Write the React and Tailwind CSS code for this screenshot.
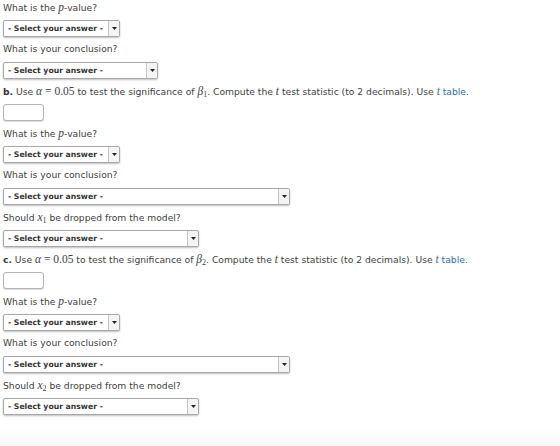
import React from 'react'

const sans = "font-['DejaVu_Sans',Verdana,sans-serif]"
const serif = "font-['Liberation_Serif',serif]"

function M({ children, italic }) {
  return <span className={`${serif} text-[11.5px] ${italic ? 'italic' : ''}`}>{children}</span>
}

function Label({ children }) {
  return <div className={`h-[14px] leading-[14px] text-[9.2px] text-[#404040] whitespace-nowrap ${sans}`}>{children}</div>
}

function Select({ width }) {
  return (
    <div
      className="mt-[6px] h-[17px] flex items-stretch bg-white border border-[#a8a8a8] rounded-[2px] shadow-[0_1px_2px_rgba(0,0,0,0.25)]"
      style={{ width }}
    >
      <span className={`flex-1 pl-[4px] leading-[15px] text-[7.7px] font-bold text-[#333] ${sans}`}>- Select your answer -</span>
      <span className="w-[11px] border-l border-[#c4c4c4] bg-[#f4f4f4] flex items-center justify-center">
        <svg width="5" height="3" viewBox="0 0 5 3">
          <path d="M0 0h5L2.5 3z" fill="#222" />
        </svg>
      </span>
    </div>
  )
}

function Input() {
  return <div className="mt-[6px] h-[17px] w-[41px] bg-white border border-[#b4b4b4] rounded-[3px] shadow-[0_1px_1px_rgba(0,0,0,0.15)]" />
}

function Block({ children }) {
  return <div className="mb-[5px]">{children}</div>
}

function PartHeader({ letter, sub }) {
  return (
    <Label>
      <b className="text-[#333]">{letter}.</b> Use <M italic>α</M> <M>= 0.05</M> to test the significance of{' '}
      <M italic>β</M>
      <span className={`${serif} text-[8px] align-[-2px]`}>{sub}</span>. Compute the <M italic>t</M> test statistic (to 2
      decimals). Use{' '}
      <span className="text-[#2a6fb0]">
        <M italic>t</M> table
      </span>
      .
    </Label>
  )
}

function Dropped({ sub }) {
  return (
    <Label>
      Should <M italic>x</M>
      <span className={`${serif} text-[8px] align-[-2px]`}>{sub}</span> be dropped from the model?
    </Label>
  )
}

export default function App() {
  return (
    <div className="w-[560px] h-[446px] bg-gradient-to-b from-white from-[96%] to-[#f8f8f8] px-[3px] overflow-hidden">
      <Block>
        <Label>What is the <M italic>p</M>-value?</Label>
        <Select width={117} />
      </Block>
      <Block>
        <Label>What is your conclusion?</Label>
        <Select width={155} />
      </Block>
      <Block>
        <PartHeader letter="b" sub="1" />
        <Input />
      </Block>
      <Block>
        <Label>What is the <M italic>p</M>-value?</Label>
        <Select width={117} />
      </Block>
      <Block>
        <Label>What is your conclusion?</Label>
        <Select width={287} />
      </Block>
      <Block>
        <Dropped sub="1" />
        <Select width={196} />
      </Block>
      <Block>
        <PartHeader letter="c" sub="2" />
        <Input />
      </Block>
      <Block>
        <Label>What is the <M italic>p</M>-value?</Label>
        <Select width={117} />
      </Block>
      <Block>
        <Label>What is your conclusion?</Label>
        <Select width={287} />
      </Block>
      <Block>
        <Dropped sub="2" />
        <Select width={196} />
      </Block>
    </div>
  )
}
